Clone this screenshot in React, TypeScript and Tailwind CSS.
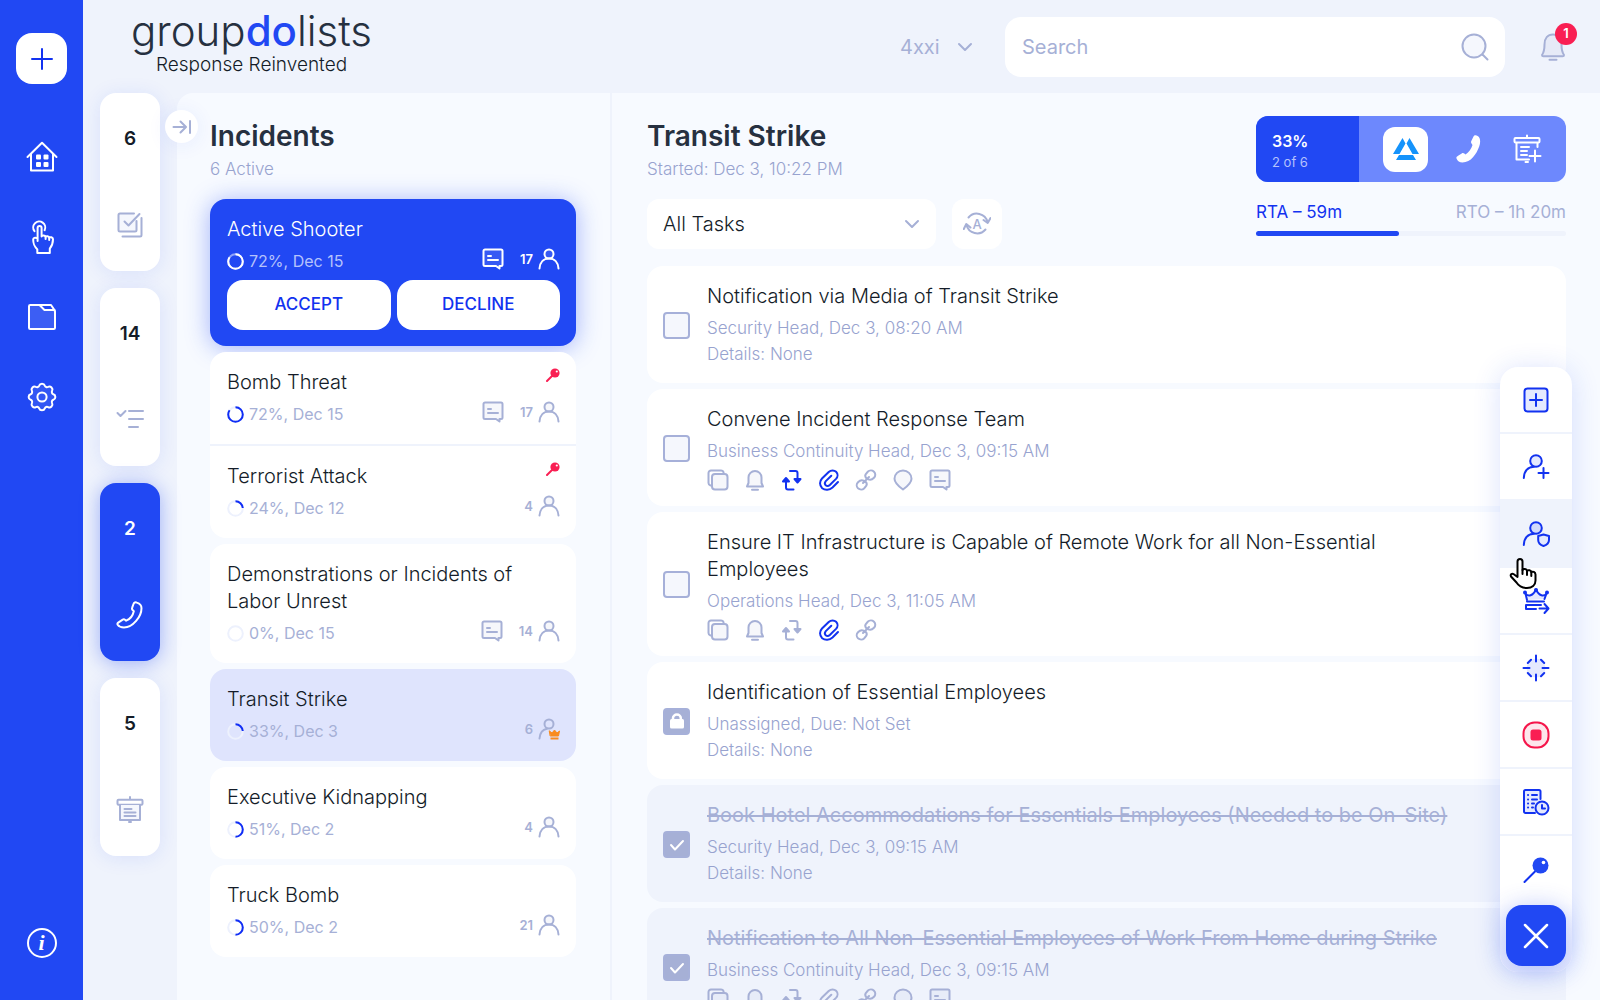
import React from "react";

type IconProps = { className?: string };

function Svg({ className = "", size = 24, sw = 2, children }: { className?: string; size?: number; sw?: number; children: React.ReactNode }) {
  return (
    <svg
      aria-hidden="true"
      className={"shrink-0 " + className}
      width={size}
      height={size}
      viewBox={`0 0 ${size} ${size}`}
      fill="none"
      stroke="currentColor"
      strokeWidth={sw}
      strokeLinecap="round"
      strokeLinejoin="round"
    >
      {children}
    </svg>
  );
}

/* ---------- rail icons ---------- */

const HomeIcon = () => (
  <Svg size={32}>
    <path d="M1.5 16 16 1.8 30.5 16" />
    <path d="M5 13v16.5h22V13" />
    <g fill="currentColor" stroke="none">
      <rect x="10" y="13.5" width="5" height="5" rx="1" />
      <rect x="17.5" y="13.5" width="5" height="5" rx="1" />
      <rect x="10" y="21" width="5" height="5" rx="1" />
      <rect x="17.5" y="21" width="5" height="5" rx="1" />
    </g>
  </Svg>
);

const TapIcon = () => (
  <Svg size={36}>
    <path d="M10.500 12.200A6 6 0 1 1 20.600 11.200" />
    <path d="M13.600 22V9a2 2 0 0 1 4 0v8.500c.5-1.600 3.600-1.400 4 .3.700-1 3.200-.8 3.600.8.900-.8 3.600-.5 3.800 1.600 0 3.800-.6 6-3.200 9.500V34H13.300v-3.600C9.600 26.500 9.200 24.500 9.200 20.500c0-1.200 1.600-2.800 4.400-1" />
    <path d="M21.600 17.800V20M25.200 18.600V21" />
  </Svg>
);

const FolderIcon = () => (
  <Svg size={30}>
    <path d="M2 4.200C2 3.500 2.500 3 3.200 3h9.300L17.500 8H26.500c.8 0 1.500.6 1.500 1.400V25.700c0 .7-.6 1.300-1.300 1.300H3.300C2.600 27 2 26.400 2 25.700Z" fill="#ffffff" fillOpacity=".12" />
    <path d="M12.500 3H24l3.600 5.200" />
  </Svg>
);

const GearIcon = () => (
  <Svg size={30}>
    <path d="M12.200 3.600c.8-2.600 4.800-2.600 5.600 0 .6 1.500 2 1.900 3.300 1.300 2.500-1.300 5.300 1.500 4 4-.6 1.300-.2 2.700 1.300 3.300 2.600.8 2.600 4.800 0 5.600-1.500.6-1.900 2-1.300 3.300 1.300 2.500-1.500 5.300-4 4-1.300-.6-2.700-.2-3.300 1.300-.8 2.600-4.800 2.600-5.600 0-.6-1.500-2-1.900-3.300-1.300-2.500 1.300-5.300-1.500-4-4 .6-1.300.2-2.700-1.300-3.300-2.600-.8-2.600-4.800 0-5.600 1.500-.6 1.900-2 1.300-3.300-1.300-2.500 1.500-5.300 4-4 1.300.6 2.700.2 3.300-1.300Z" fill="#ffffff" fillOpacity=".08" />
    <circle cx="15" cy="15" r="4.600" />
  </Svg>
);

/* ---------- tab icons ---------- */

const ChecksIcon = () => (
  <Svg size={28}>
    <path d="M18 2.500H4A1.500 1.500 0 0 0 2.500 4v15A1.500 1.500 0 0 0 4 20.500h15a1.500 1.500 0 0 0 1.500-1.500V10" fill="#f5f7fd" />
    <path d="M25.500 7v17a1.500 1.500 0 0 1-1.500 1.500H6.500" />
    <path d="m8.500 10.500 4 4L23.500 3" />
  </Svg>
);

const ListIcon = () => (
  <Svg size={28}>
    <path d="m1.500 7 3 3 5-5M13 5h14M13 13h14M13 21h9" />
  </Svg>
);

const PhoneOutline = () => (
  <Svg size={28}>
    <path d="M17.500 3c.6-1.600 2-2 3.300-1.400 3.300 1 4.700 2.900 4.700 5.600C25.500 15.500 17 26.500 8 26.500c-3 0-5.300-1.200-6.300-2.700-.5-.9-.3-1.600.5-2.200l4.500-3c.9-.5 1.600-.4 2.300.1l1.200 1c4-1.700 6.800-5.700 7.600-9.500l-1-1c-.8-.7-1-1.500-.6-2.500Z" />
  </Svg>
);

const BoardIcon = () => (
  <Svg size={28}>
    <rect x="1.500" y="3.800" width="25" height="5" rx="1" />
    <path d="M4 9v15h20V9" fill="#f5f7fd" />
    <path d="M14 1v2M13 26h2M8.500 13h7M8.500 16.500h11M8.500 20h11" />
  </Svg>
);

const BoardPlusIcon = () => (
  <Svg size={30}>
    <rect x="2.500" y="4" width="25" height="4.500" rx="1" />
    <path d="M4.500 9v16.500H17M25.500 9v4M15 1.500V3.500M13.500 28h2.500M9 13h8M9 17h6M9 21h6M23 16.500v11M17.500 22h11" />
  </Svg>
);

/* ---------- small status icons ---------- */

const ChatIcon = ({ className }: IconProps) => (
  <Svg size={22} className={className}>
    <path d="M3 1.500h16A1.500 1.500 0 0 1 20.500 3v13.500A1.500 1.500 0 0 1 19 18h-1.500v2.500L14 18H3a1.500 1.500 0 0 1-1.500-1.500V3A1.500 1.500 0 0 1 3 1.500Z" fill="currentColor" fillOpacity=".1" />
    <path d="M6 8h3M6 12h10" />
  </Svg>
);

const UserIcon = ({ className }: IconProps) => (
  <Svg size={22} className={className}>
    <circle cx="11" cy="6" r="4.500" fill="currentColor" fillOpacity=".1" />
    <path d="M1.500 20.500c.4-6 4-10 9.500-10s9.100 4 9.500 10" />
  </Svg>
);

const LeaderIcon = ({ className }: IconProps) => (
  <Svg size={22} className={className}>
    <circle cx="11" cy="6" r="4.500" />
    <path d="M1.500 20.500c.4-6 3-9 7.500-9.800" />
    <path d="m11.500 13 2.500 2 2.500-3 2.500 3 2.500-2-1 5h-8Z" fill="#f98b1d" stroke="#f98b1d" strokeWidth="1" />
    <path d="M12.500 20.500h8" stroke="#f98b1d" strokeWidth="2" strokeLinecap="butt" />
  </Svg>
);

const CopyIcon = ({ className }: IconProps) => (
  <Svg size={22} className={className}>
    <path d="M3.500 16.500C2 16 1.500 15 1.500 14V4A2.500 2.500 0 0 1 4 1.500h10c1.200 0 2.200.5 2.600 2" />
    <rect x="5" y="5" width="15.500" height="15.500" rx="3" fill="currentColor" fillOpacity=".1" />
  </Svg>
);

const BellSmall = ({ className }: IconProps) => (
  <Svg size={22} className={className}>
    <path d="M3 17.500 4.500 14V8.500a6.500 6.500 0 0 1 13 0V14l1.500 3.500Z" fill="currentColor" fillOpacity=".1" />
    <path d="M8 20.800h6" />
  </Svg>
);

const RepeatIcon = ({ className }: IconProps) => (
  <Svg size={22} className={className}>
    <path d="M9 2h5.500a2 2 0 0 1 2 2v8M12.500 20.500H7a2 2 0 0 1-2-2V11" />
    <path d="m13.500 10 3 3.500 3-3.500ZM2 12.500 5 9l3 3.500Z" fill="currentColor" />
  </Svg>
);

const ClipIcon = ({ className }: IconProps) => (
  <Svg size={22} className={className}>
    <path d="m20 13-5.500 5.500c-3 2.800-7.500 3-10.300.7-2.900-2.700-2.800-7-.2-9.700l6.700-6.500c2.300-2.200 5.600-2 7.400-.2 2 2 1.900 5-.1 7.100l-6.200 6.100c-1.300 1.200-3 1.200-4.100.2-1.100-1.200-1.100-2.800.1-4.100l5.500-5.400" />
  </Svg>
);

const LinkIcon = ({ className }: IconProps) => (
  <Svg size={22} className={className}>
    <path d="M11.500 9.500c-1.800-2-1.200-4.200.2-5.500l1-1.200c1.800-1.800 4.600-1.700 6.300-.1 1.700 1.700 1.700 4.400 0 6.100-1.600 1.600-3.400 2.500-5.700 1.500M10.500 12.500c1.800 2 1.200 4.200-.2 5.500l-1 1.200c-1.800 1.800-4.600 1.700-6.300.1-1.700-1.700-1.700-4.400 0-6.100 1.600-1.600 3.400-2.500 5.700-1.500M8 14l6-6" />
  </Svg>
);

const PlaceIcon = ({ className }: IconProps) => (
  <Svg size={22} className={className}>
    <path d="M11 20.500C5.500 16.500 2.500 13.500 2.500 9.700a8.500 8.200 0 0 1 17 0c0 3.800-3 6.800-8.500 10.800Z" fill="currentColor" fillOpacity=".1" />
  </Svg>
);

const PinIcon = () => (
  <Svg size={14} className="text-[#f91f53]">
    <path d="M1 13 6 8" />
    <circle cx="9" cy="5" r="4.600" fill="currentColor" stroke="none" />
    <circle cx="10.800" cy="3.500" r="1.100" fill="#fff" stroke="none" />
  </Svg>
);

const Chevron = ({ className }: IconProps) => (
  <Svg size={16} className={className}>
    <path d="m2 5 6 6 6-6" />
  </Svg>
);

/* ---------- action menu icons ---------- */

const AddBoxIcon = () => (
  <Svg size={28}>
    <rect x="2.500" y="2.500" width="23" height="23" rx="3" fill="#e4e9fe" />
    <path d="M8 14h12M14 8v12" />
  </Svg>
);

const UserPlusIcon = () => (
  <Svg size={28}>
    <circle cx="14" cy="8" r="5.800" fill="#e4e9fe" />
    <path d="M1.800 25C2.200 18 6 14 12 13.800M16.500 20h10M21.500 15v10" />
  </Svg>
);

const UserShieldIcon = () => (
  <Svg size={28}>
    <circle cx="14" cy="8" r="5.800" fill="#d3dbfb" />
    <path d="M1.800 25C2.200 18 6 14 12 13.800" />
    <path d="M21.500 14.500 27 16v4c0 3-2.500 5-5.500 6-3-1-5.300-3-5.300-6v-4Z" fill="#e4e9fe" />
  </Svg>
);

const CrownIcon = () => (
  <Svg size={28}>
    <path d="M5 13 3.500 6.500c2.500 3.500 7.500 2.500 10.500-4 3 6.500 8 7.500 10.500 4L22.500 12" fill="#e4e9fe" />
    <path d="M5 14.500h17M14 22H4v-4h15M17.500 21.500H26M22.500 17l4 4.500-4 4.500" />
    <g fill="currentColor" stroke="none">
      <circle cx="3" cy="5.500" r="2" />
      <circle cx="14" cy="3" r="2" />
      <circle cx="25" cy="5.500" r="2" />
    </g>
  </Svg>
);

const TargetIcon = () => (
  <Svg size={28}>
    <circle cx="14" cy="14" r="9.500" fill="#e4e9fe" stroke="none" />
    <path d="M14 1.500v6M14 20.500v6M1.500 14h6M20.500 14h6M9 5.800 5.800 9M19 5.800 22.200 9M9 22.200 5.800 19M19 22.200 22.200 19" />
  </Svg>
);

const StopIcon = () => (
  <Svg size={28} className="text-[#f5164b]">
    <rect x="1.500" y="1.500" width="25" height="25" rx="11" fill="#fde6ec" />
    <rect x="8.500" y="8.500" width="11" height="11" rx="2.500" fill="#f91f53" stroke="none" />
  </Svg>
);

const LogClockIcon = () => (
  <Svg size={28}>
    <path d="M18.500 11V3.500a1.500 1.500 0 0 0-1.500-1.500H3.500A1.500 1.500 0 0 0 2 3.500v20A1.500 1.500 0 0 0 3.500 25H13" fill="#e4e9fe" />
    <path d="M6 7h.1M6 11.500h.1M6 15.500h.1M6 19.500h.1M10 7h5M10 11.500h5M10 15.500h2M10 19.500h1" />
    <circle cx="20" cy="20" r="6.500" fill="#e4e9fe" />
    <path d="M20 17v3.500h3" />
  </Svg>
);

const BigPinIcon = () => (
  <Svg size={28}>
    <path d="M2.500 26 13 15.500" />
    <circle cx="18.500" cy="9.500" r="8" fill="#2148f3" stroke="none" />
    <circle cx="21.500" cy="6.500" r="1.800" fill="#fff" stroke="none" />
  </Svg>
);

/* ---------- data ---------- */

type Incident = {
  title: string;
  percent: number;
  ring: number;
  date: string;
  people: number;
  chat?: boolean;
  pinned?: boolean;
  leader?: boolean;
  state?: "alert" | "selected";
};

const groups: Incident[][] = [
  [{ title: "Active Shooter", percent: 72, ring: 85, date: "Dec 15", people: 17, chat: true, state: "alert" }],
  [
    { title: "Bomb Threat", percent: 72, ring: 85, date: "Dec 15", people: 17, chat: true, pinned: true },
    { title: "Terrorist Attack", percent: 24, ring: 24, date: "Dec 12", people: 4, pinned: true },
  ],
  [{ title: "Demonstrations or Incidents of Labor Unrest", percent: 0, ring: 0, date: "Dec 15", people: 14, chat: true }],
  [{ title: "Transit Strike", percent: 33, ring: 24, date: "Dec 3", people: 6, leader: true, state: "selected" }],
  [{ title: "Executive Kidnapping", percent: 51, ring: 50, date: "Dec 2", people: 4 }],
  [{ title: "Truck Bomb", percent: 50, ring: 50, date: "Dec 2", people: 21 }],
];

type Task = {
  title: string;
  meta: string;
  state: "open" | "locked" | "done";
  icons?: number;
  repeat?: boolean;
  clip?: boolean;
};

const tasks: Task[] = [
  { title: "Notification via Media of Transit Strike", meta: "Security Head, Dec 3, 08:20 AM", state: "open" },
  { title: "Convene Incident Response Team", meta: "Business Continuity Head, Dec 3, 09:15 AM", state: "open", icons: 7, repeat: true, clip: true },
  { title: "Ensure IT Infrastructure is Capable of Remote Work for all Non-Essential Employees", meta: "Operations Head, Dec 3, 11:05 AM", state: "open", icons: 5, clip: true },
  { title: "Identification of Essential Employees", meta: "Unassigned, Due: Not Set", state: "locked" },
  { title: "Book Hotel Accommodations for Essentials Employees (Needed to be On-Site)", meta: "Security Head, Dec 3, 09:15 AM", state: "done" },
  { title: "Notification to All Non-Essential Employees of Work From Home during Strike", meta: "Business Continuity Head, Dec 3, 09:15 AM", state: "done", icons: 7 },
];

const tabs = [
  { count: 6, label: "Tasks", icon: <ChecksIcon /> },
  { count: 14, label: "Checklists", icon: <ListIcon /> },
  { count: 2, label: "Calls", icon: <PhoneOutline />, active: true },
  { count: 5, label: "Boards", icon: <BoardIcon /> },
];

const actions = [
  { label: "Add task", icon: <AddBoxIcon /> },
  { label: "Add member", icon: <UserPlusIcon /> },
  { label: "Assign role", icon: <UserShieldIcon />, hover: true },
  { label: "Transfer lead", icon: <CrownIcon /> },
  { label: "Locate", icon: <TargetIcon /> },
  { label: "Stop incident", icon: <StopIcon /> },
  { label: "Activity log", icon: <LogClockIcon /> },
  { label: "Pin incident", icon: <BigPinIcon /> },
];

/* ---------- parts ---------- */

function Ring({ value, alert }: { value: number; alert?: boolean }) {
  return (
    <svg aria-hidden="true" width="17" height="17" viewBox="0 0 17 17" fill="none" strokeWidth="2" className="shrink-0">
      <circle cx="8.500" cy="8.500" r="7.300" stroke={alert ? "#8ea2fa" : "#edf1fd"} />
      {value > 0 && (
        <circle cx="8.500" cy="8.500" r="7.300" stroke={alert ? "#ffffff" : "#0f2df5"} pathLength={100} strokeDasharray={`${value} 100`} transform="rotate(-90 8.500 8.500)" />
      )}
    </svg>
  );
}

function IncidentRow({ item }: { item: Incident }) {
  const alert = item.state === "alert";
  return (
    <article className={"relative pt-[17px] pr-4 pl-[17px] " + (alert ? "pb-4 text-white" : "pb-[18px] text-[#141c28]")}>
      <h2 className="pr-6 text-[20px] leading-[27px] font-light">{item.title}</h2>
      {item.pinned && (
        <span className="absolute top-4 right-4">
          <PinIcon />
        </span>
      )}
      <div className={"mt-[6px] flex h-6 items-center " + (alert ? "text-white" : "text-[#a6b0d6]")}>
        <Ring value={item.ring} alert={alert} />
        <span className={"ml-[5px] text-[16px] leading-6 " + (alert ? "text-[#b5c2fc]" : "")}>
          {item.percent}%, {item.date}
        </span>
        <span className="ml-auto flex items-center pb-1">
          {item.chat && <ChatIcon className="mr-4" />}
          <span className="mr-[5px] text-[13px] leading-5 font-semibold">{item.people}</span>
          {item.leader ? <LeaderIcon /> : <UserIcon />}
        </span>
      </div>
      {alert && (
        <div className="mt-[7px] grid grid-cols-2 gap-[6px] text-[17px] font-medium text-[#1232f0]">
          <button className="h-[50px] rounded-2xl bg-white">ACCEPT</button>
          <button className="h-[50px] rounded-2xl bg-white">DECLINE</button>
        </div>
      )}
    </article>
  );
}

function TaskCard({ task, index }: { task: Task; index: number }) {
  const done = task.state === "done";
  const id = `task-${index}`;
  const rowIcons = [
    <CopyIcon key="copy" />,
    <BellSmall key="bell" />,
    <RepeatIcon key="repeat" className={task.repeat ? "text-[#1232f0]" : ""} />,
    <ClipIcon key="clip" className={task.clip ? "text-[#1232f0]" : ""} />,
    <LinkIcon key="link" />,
    <PlaceIcon key="place" />,
    <ChatIcon key="chat" />,
  ];
  return (
    <li className={"flex shrink-0 items-center gap-[17px] rounded-2xl pt-[17px] pr-[90px] pb-4 pl-4 " + (done ? "bg-[#eff3fc]" : "bg-white")}>
      <span className="relative flex size-[27px] shrink-0">
        <input
          id={id}
          type="checkbox"
          defaultChecked={done}
          disabled={task.state === "locked"}
          className="size-[27px] appearance-none rounded-[4px] border-2 border-[#a6b0d9] bg-[#f5f7fd] checked:bg-[#a6b0d6] disabled:bg-[#a6b0d6]"
        />
        {done && (
          <svg aria-hidden="true" className="pointer-events-none absolute inset-0" width="27" height="27" viewBox="0 0 27 27" fill="none" stroke="#fff" strokeWidth="2" strokeLinecap="round" strokeLinejoin="round">
            <path d="m8 14 4 4.500 8-8.500" />
          </svg>
        )}
        {task.state === "locked" && (
          <svg aria-hidden="true" className="pointer-events-none absolute inset-0" width="27" height="27" viewBox="0 0 27 27" fill="none" stroke="#fff" strokeWidth="2.500">
            <rect x="7" y="11" width="14" height="9.500" rx="1.500" fill="#fff" stroke="none" />
            <path d="M10 12v-2a3.800 3.300 0 0 1 7.800 0v2" />
          </svg>
        )}
      </span>
      <div className="min-w-0 text-[#a6b0d6]">
        <label htmlFor={id} className={"block text-[20px] leading-[27px] " + (done ? "line-through" : "font-light text-[#141c28]")}>
          {task.title}
        </label>
        <p className="mt-[5px] text-[17px] leading-[26px] font-light text-[#98a3cf]">{task.meta}</p>
        {task.icons ? (
          <div className="flex h-[26px] items-center gap-[15px] pt-[6px]">{rowIcons.slice(0, task.icons)}</div>
        ) : (
          <p className="text-[17px] leading-[26px] font-light text-[#98a3cf]">Details: None</p>
        )}
      </div>
    </li>
  );
}

export default function App() {
  return (
    <div className="flex h-screen overflow-hidden bg-[#eff3fc] font-['Inter','Liberation_Sans',sans-serif] text-[#141c28]">
      <nav aria-label="Main" className="flex w-[83px] shrink-0 flex-col items-center bg-[#2148f3] pt-[33px] pb-[42px] text-white">
        <button aria-label="Create" className="flex size-[51px] items-center justify-center rounded-2xl bg-white text-[#1232f0]">
          <Svg size={24}>
            <path d="M2 12h20M12 2v20" />
          </Svg>
        </button>
        <div className="mt-[55px] flex flex-col items-center gap-11">
          <a href="#home" aria-label="Home" className="flex h-9 items-center"><HomeIcon /></a>
          <a href="#activate" aria-label="Activate" className="flex h-9 items-center"><TapIcon /></a>
          <a href="#files" aria-label="Files" className="flex h-9 items-center"><FolderIcon /></a>
          <a href="#settings" aria-label="Settings" className="flex h-9 items-center"><GearIcon /></a>
        </div>
        <a href="#info" aria-label="Information" className="mt-auto flex size-[30px] items-center justify-center rounded-full border-2 border-white font-['Liberation_Serif',serif] text-[22px] leading-none font-bold italic">
          i
        </a>
      </nav>

      <div className="flex min-w-0 flex-1 flex-col">
        <header className="flex h-[93px] shrink-0 items-center pr-[33px] pl-12">
          <a href="#top" className="flex flex-col items-center pb-2">
            <span className="text-[42px] leading-[44px] font-light text-[#263040]">
              group<span className="font-medium text-[#2148f3]">do</span>lists
            </span>
            <span className="text-[19px] leading-6 font-light">Response Reinvented</span>
          </a>
          <label className="relative ml-auto flex items-center text-[#a6b0d6]">
            <span className="sr-only">Organization</span>
            <select className="h-11 w-[73px] appearance-none bg-transparent text-[20px] outline-none">
              <option>4xxi</option>
            </select>
            <Chevron className="pointer-events-none absolute right-0" />
          </label>
          <label className="ml-8 flex h-[60px] w-[500px] items-center rounded-2xl bg-white pr-4 pl-[17px] text-[#a6b0d6]">
            <span className="sr-only">Search</span>
            <input type="search" placeholder="Search" className="h-11 min-w-0 flex-1 bg-transparent text-[20px] outline-none placeholder:text-[#a6b0d6]" />
            <Svg size={28}>
              <circle cx="13" cy="13" r="11.500" fill="#f5f7fd" />
              <path d="m21.500 21.500 5 5" />
            </Svg>
          </label>
          <button aria-label="Notifications, 1 new" className="relative ml-[34px] flex text-[#a6b0d6]">
            <Svg size={28}>
              <path d="M3 22c1.800-2.500 2.500-5 2.500-10.500C5.500 5.500 8.700 1.500 14 1.500s8.500 4 8.500 10c0 5.500.7 8 2.500 10.500 0 1-.5 1.200-1.500 1.200h-19c-1 0-1.500-.2-1.500-1.200Z" fill="#e6eaf7" />
              <path d="M10.500 26.800h7" />
            </Svg>
            <span className="absolute -top-[10px] -right-[10px] flex size-[22px] items-center justify-center rounded-full bg-[#f91f53] text-[13px] font-semibold text-white">1</span>
          </button>
        </header>

        <div className="flex min-h-0 flex-1">
          <div className="relative z-10 flex w-[94px] shrink-0 flex-col gap-[17px] pl-[17px]">
            {tabs.map((t) => (
              <button
                key={t.label}
                aria-label={`${t.label}: ${t.count}`}
                className={
                  "flex h-[178px] w-[60px] flex-col items-center justify-between rounded-2xl py-8 " +
                  (t.active ? "bg-[#2148f3] text-white shadow-[0_2px_20px_rgba(33,72,243,0.4)]" : "bg-white text-[#a6b0d6] shadow-[0_2px_20px_rgba(33,72,243,0.1)]")
                }
              >
                <span className={"text-[19px] leading-7 font-semibold " + (t.active ? "" : "text-[#141c28]")}>{t.count}</span>
                {t.icon}
              </button>
            ))}
            <button aria-label="Collapse incidents" className="absolute top-[17px] left-[82px] flex size-[33px] items-center justify-center rounded-full bg-white text-[#a6b0d6] shadow-[0_2px_20px_rgba(33,72,243,0.08)]">
              <Svg size={20}>
                <path d="M1.500 10h12M8.500 4.500l5.500 5.500-5.500 5.500M18 4v12" />
              </Svg>
            </button>
          </div>

          <section className="flex w-[435px] shrink-0 flex-col rounded-tl-2xl border-r-2 border-[#eff3fc] bg-[#f7faff] pr-[34px] pl-[33px]">
            <h1 className="mt-[25px] text-[28px] leading-9 font-semibold text-[#263040]">Incidents</h1>
            <p className="mt-[3px] text-[17px] leading-6 font-light text-[#98a3cf]">6 Active</p>
            <div className="mt-[18px] flex flex-col gap-[6px]">
              {groups.map((group) => (
                <div
                  key={group[0].title}
                  className={
                    "divide-y-2 divide-[#eff3fc] rounded-2xl " +
                    (group[0].state === "alert" ? "bg-[#2148f3] shadow-[0_2px_24px_rgba(33,72,243,0.4)]" : group[0].state === "selected" ? "bg-[#dfe4fd]" : "relative bg-white")
                  }
                >
                  {group.map((item) => (
                    <IncidentRow key={item.title} item={item} />
                  ))}
                </div>
              ))}
            </div>
          </section>

          <main className="flex min-w-0 flex-1 flex-col bg-[#f7faff] pr-[34px] pl-[35px]">
            <div className="flex justify-between">
              <div>
                <h1 className="mt-[25px] text-[28px] leading-9 font-semibold text-[#263040]">Transit Strike</h1>
                <p className="mt-[3px] text-[17px] leading-6 font-light text-[#98a3cf]">Started: Dec 3, 10:22 PM</p>
                <div className="mt-[18px] flex gap-4">
                  <label className="relative flex items-center">
                    <span className="sr-only">Task filter</span>
                    <select className="h-[50px] w-[289px] appearance-none rounded-xl bg-white px-4 text-[20px] font-light outline-none">
                      <option>All Tasks</option>
                    </select>
                    <Chevron className="pointer-events-none absolute right-4 text-[#a6b0d6]" />
                  </label>
                  <button aria-label="Auto refresh" className="flex size-[50px] items-center justify-center rounded-xl bg-white text-[#a6b0d6]">
                    <Svg size={28}>
                      <path d="M5.500 7.500A11 11 0 0 1 24.500 12M22.500 19.500A11 11 0 0 1 3.500 15" />
                      <path d="m20.500 10 4.200 3 2.800-5M7.500 17.500 3.300 14 .8 19" />
                      <text x="14" y="18.500" textAnchor="middle" fontSize="13" fontWeight="500" fill="currentColor" stroke="none">A</text>
                    </Svg>
                  </button>
                </div>
              </div>
              <div className="w-[310px]">
                <div className="mt-[23px] flex h-[66px] overflow-hidden rounded-xl bg-[#6d88fd] text-white">
                  <div className="flex w-1/3 flex-col justify-center bg-[#2148f3] pt-1 pl-4">
                    <span className="text-[16px] leading-[22px] font-semibold">33%</span>
                    <span className="text-[13px] leading-5 text-[#b5c2fc]">2 of 6</span>
                  </div>
                  <div className="flex flex-1 items-center justify-between pr-6 pl-6">
                    <button aria-label="Open board" className="flex size-[45px] items-center justify-center rounded-xl bg-white">
                      <svg aria-hidden="true" width="26" height="22" viewBox="0 0 26 22" fill="#1593fb">
                        <path d="M9.500 0 12.500 5.500 6.500 16H0ZM16.500 0 13.500 5.500 19.500 16H26ZM6 17h14l3 5H3Z" />
                      </svg>
                    </button>
                    <button aria-label="Call">
                      <svg aria-hidden="true" width="28" height="28" viewBox="0 0 28 28" fill="currentColor">
                        <path d="M17.500 1.500C18.500-.5 22 .2 23.500 3c1 2.500.8 5.500-.3 8.500C20.500 19 15 27.500 6.500 27.500c-3 0-5-1.500-6-4-.4-1.200.2-2 1.200-2.600l4-2.500c1-.6 2-.4 2.600.2l1.200 1c3-2 6-6 7-9.600l-.8-1.200c-.8-1-.8-1.800-.4-2.800Z" />
                      </svg>
                    </button>
                    <button aria-label="Add board"><BoardPlusIcon /></button>
                  </div>
                </div>
                <div className="mt-[18px] flex justify-between text-[17px] leading-6 text-[#a6b0d6]">
                  <span className="text-[#1232f0]">RTA – 59m</span>
                  <span>RTO – 1h 20m</span>
                </div>
                <div className="mt-[7px] h-[5px] rounded-full bg-[#eff3fc]">
                  <div className="h-full w-[46%] rounded-full bg-[#2148f3]" />
                </div>
              </div>
            </div>
            <ul className="mt-[17px] flex min-h-0 flex-1 flex-col gap-[6px] overflow-hidden">
              {tasks.map((task, i) => (
                <TaskCard key={task.title} task={task} index={i} />
              ))}
            </ul>
          </main>
        </div>
      </div>

      <aside className="absolute right-7 bottom-7 z-20 flex w-[72px] flex-col rounded-[18px] bg-white text-[#1232f0] shadow-[0_2px_28px_rgba(33,72,243,0.16)]">
        {actions.map((a, i) => (
          <button
            key={a.label}
            aria-label={a.label}
            className={
              "flex h-[67px] items-center justify-center " +
              (i < actions.length - 1 ? "border-b-2 border-[#eff3fc] " : "") +
              (a.hover ? "relative bg-[#eff3fc]" : "")
            }
          >
            {a.icon}
            {a.hover && (
              <svg aria-hidden="true" className="absolute top-[56px] left-[9px] z-10" width="30" height="34" viewBox="0 0 30 34" fill="#fff" stroke="#000" strokeWidth="2" strokeLinejoin="round" strokeLinecap="round">
                <path d="M8.500 20V4.500a2.500 2.500 0 0 1 5 0V13c.8-1.500 4.200-1.200 4.500.8 1-1.200 4-.6 4.300 1.200 1.500-.8 4-.2 4.200 2.500v6c0 4.500-3.500 7.500-8.500 7.500-5.500 0-8-1.500-10.500-5.500L2 19.500c-1-2 1-3.500 2.800-2.200Z" />
                <path d="M13.500 13v4M18 14v4M22.300 15.500V19" />
              </svg>
            )}
          </button>
        ))}
        <div className="rounded-b-[18px] bg-linear-to-b from-white to-[#e3e8fd] px-[6px] pt-[2px] pb-[6px]">
          <button aria-label="Close menu" className="flex h-[61px] w-full items-center justify-center rounded-2xl bg-[#2148f3] text-white shadow-[0_2px_24px_rgba(33,72,243,0.3)]">
            <Svg size={28} sw={2.5}>
              <path d="m3 3 22 22M25 3 3 25" />
            </Svg>
          </button>
        </div>
      </aside>
    </div>
  );
}
